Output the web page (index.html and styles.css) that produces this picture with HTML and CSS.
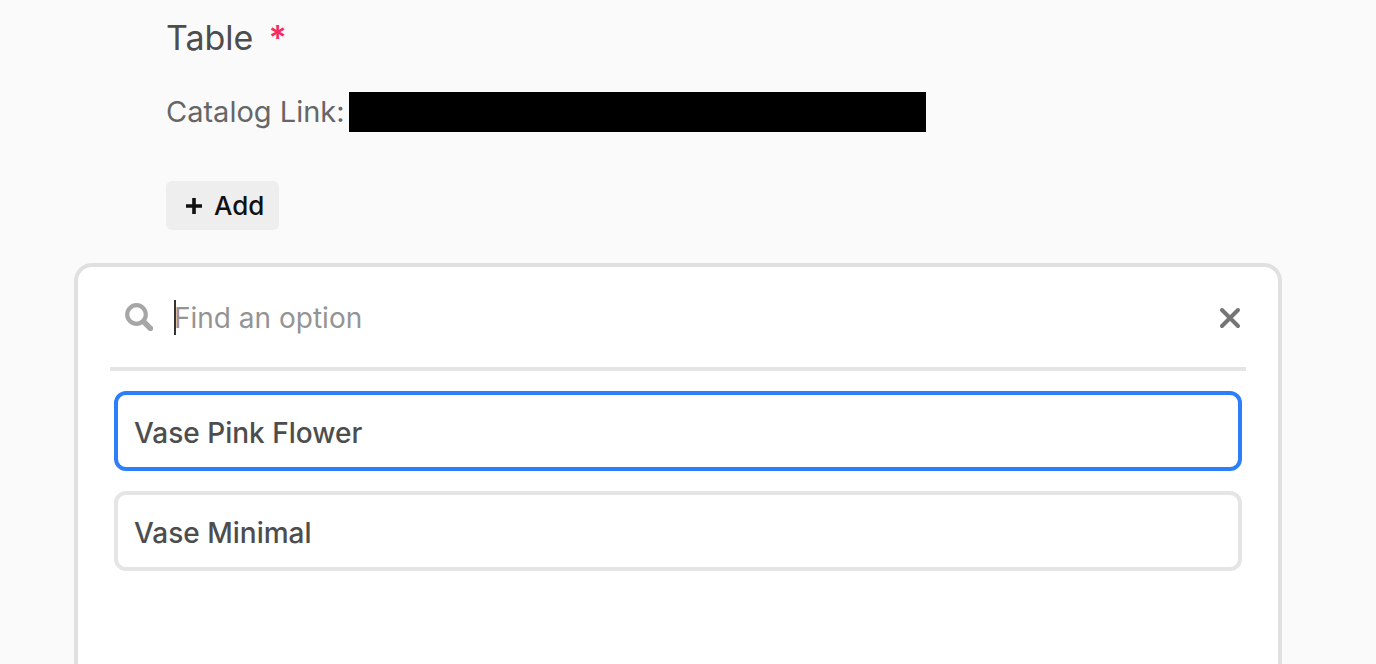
FILE: index.html
```html
<!DOCTYPE html>
<html lang="en">
<head>
  <meta charset="UTF-8">
  <meta name="viewport" content="width=device-width, initial-scale=1.0">
  <title>Table</title>
  <link rel="stylesheet" href="styles.css">
</head>
<body>
  <section class="field">
    <h1 class="field-label">Table <span class="required">*</span></h1>
    <p class="field-help">Catalog Link: <span class="redacted"></span></p>
    <button class="add-button" type="button">
      <svg width="16" height="16" viewBox="0 0 16 16" aria-hidden="true">
        <path d="M8 0v16M0 8h16" fill="none" stroke="currentColor" stroke-width="3.6"/>
      </svg>
      Add
    </button>
  </section>

  <main class="picker">
    <div class="search">
      <svg class="search-icon" width="28" height="28" viewBox="0 0 28 28" aria-hidden="true">
        <circle cx="11.5" cy="11.5" r="9.3" fill="none" stroke="currentColor" stroke-width="4.2"/>
        <path d="M18.5 18.5l7 7" fill="none" stroke="currentColor" stroke-width="5.4" stroke-linecap="round"/>
      </svg>
      <span class="caret"></span>
      <input class="search-input" type="text" placeholder="Find an option" aria-label="Find an option">
      <button class="close-button" type="button" aria-label="Close">
        <svg width="22" height="22" viewBox="0 0 22 22" aria-hidden="true">
          <path d="M3 3l16 16M19 3L3 19" fill="none" stroke="currentColor" stroke-width="4" stroke-linecap="round"/>
        </svg>
      </button>
    </div>
    <div class="options">
      <button class="option active" type="button">Vase Pink Flower</button>
      <button class="option" type="button">Vase Minimal</button>
    </div>
  </main>
</body>
</html>
```

FILE: styles.css
```css
* {
  box-sizing: border-box;
}
body {
  display: flex;
  flex-direction: column;
  min-height: 100vh;
  margin: 0;
  background: #fafafa;
  color: #4d4d4d;
  font-family: Inter, "Liberation Sans", sans-serif;
}
button,
input {
  font-family: inherit;
}
.field {
  padding: 16px 94px 0 166px;
}
.field-label {
  display: flex;
  gap: 15px;
  margin: 0;
  font-size: 34px;
  font-weight: 400;
  line-height: 44px;
}
.required {
  color: #f82b60;
  font-weight: 600;
}
.field-help {
  display: flex;
  gap: 4px;
  margin: 32px 0 0;
  color: #666;
  font-size: 29px;
  line-height: 40px;
  white-space: nowrap;
}
.redacted {
  flex: 0 1 577px;
  background: #000;
}
.add-button {
  display: flex;
  align-items: center;
  gap: 12px;
  height: 49px;
  margin-top: 49px;
  padding: 0 15px 0 20px;
  border: none;
  border-radius: 6px;
  background: #eee;
  color: #111;
  font-size: 26px;
  font-weight: 500;
  cursor: pointer;
}
.picker {
  flex: 1;
  margin: 33px 94px 0 74px;
  padding: 0 32px;
  border: 4px solid #e0e0e0;
  border-bottom: none;
  border-radius: 18px 18px 0 0;
  background: #fff;
}
.search {
  display: flex;
  align-items: center;
  height: 104px;
  padding: 0 5px 0 15px;
  border-bottom: 4px solid #e5e5e5;
}
.search-icon {
  color: #a6a6a6;
}
.caret {
  width: 2px;
  height: 35px;
  margin: 0 -2px 0 21px;
  background: #333;
}
.search-input {
  flex: 1;
  min-width: 0;
  height: 44px;
  padding: 2px 0 0;
  border: none;
  outline: none;
  background: transparent;
  color: #4d4d4d;
  font-size: 28px;
}
.search-input::placeholder {
  color: #949494;
  opacity: 1;
}
.close-button {
  display: flex;
  padding: 2px 0 0;
  border: none;
  background: none;
  color: #757575;
  cursor: pointer;
}
.options {
  display: flex;
  flex-direction: column;
  gap: 20px;
  padding: 20px 4px;
}
.option {
  height: 80px;
  padding: 4px 16px 0;
  border: 4px solid #e5e5e5;
  border-radius: 12px;
  background: #fff;
  color: #4d4d4d;
  font-size: 28px;
  font-weight: 500;
  text-align: left;
  cursor: pointer;
}
.option.active {
  border-color: #2d7ff9;
}
```
